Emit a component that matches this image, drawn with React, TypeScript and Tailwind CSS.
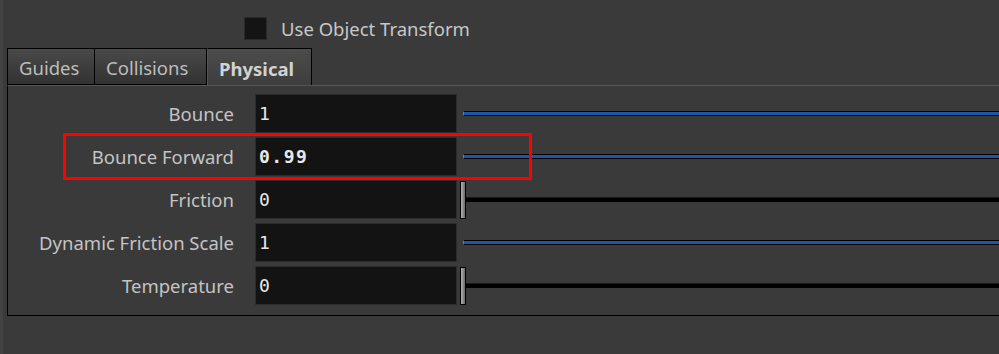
import React from "react";

const sans = "font-['Noto_Sans',_'DejaVu_Sans',_sans-serif]";
const mono = "font-['DejaVu_Sans_Mono',_'Liberation_Mono',_monospace]";

type Param = {
  label: string;
  value: string;
  bold?: boolean;
  kind: "blue" | "thumb";
};

const params: Param[] = [
  { label: "Bounce", value: "1", kind: "blue" },
  { label: "Bounce Forward", value: "0.99", bold: true, kind: "blue" },
  { label: "Friction", value: "0", kind: "thumb" },
  { label: "Dynamic Friction Scale", value: "1", kind: "blue" },
  { label: "Temperature", value: "0", kind: "thumb" },
];

function Slider({ kind }: { kind: Param["kind"] }) {
  if (kind === "blue") {
    return (
      <div className="flex-1 pl-[6px] flex items-center">
        <div className="h-[5px] flex-1 border border-black bg-[#1c58a8] border-l-[#777]" />
      </div>
    );
  }
  return (
    <div className="flex-1 pl-[3px] flex items-center">
      <div className="w-[6px] h-[38px] border border-black bg-gradient-to-r from-[#b4b4b4] to-[#6c6c6c]" />
      <div className="h-[5px] flex-1 bg-black border-t border-t-[#1a1a1a]" />
    </div>
  );
}

function Row({ p }: { p: Param }) {
  return (
    <div className="flex items-center h-[39px]">
      <div className={`w-[226px] text-right text-[18.5px] text-[#c4c4c4] ${sans}`}>{p.label}</div>
      <div className="ml-[21px] w-[202px] h-[39px] border border-[#2c2c2c] bg-[#131313] flex items-center px-[3px]">
        <span className={`text-[18px] tracking-[1.5px] text-[#e8e8e8] ${mono} ${p.bold ? "font-bold" : ""}`}>
          {p.value}
        </span>
      </div>
      <Slider kind={p.kind} />
    </div>
  );
}

function Tab({ label, active, width }: { label: string; active?: boolean; width: string }) {
  return (
    <div
      className={`${width} shrink-0 flex items-center pl-[11px] pt-[3px] text-[18.5px] ${sans} ${
        active
          ? "h-[38px] border-t border-r border-black border-l border-l-[#555] bg-gradient-to-b from-[#4c4c4c] to-[#3d3d3d] font-bold text-[#d2d2d2]"
          : "h-[37px] border border-black -ml-px first:ml-0 bg-gradient-to-b from-[#4a4a4a] to-[#323232] text-[#bdbdbd]"
      }`}
    >
      {label}
    </div>
  );
}

export default function App() {
  return (
    <div className="relative w-[999px] h-[354px] overflow-hidden bg-[#3a3a3a] flex">
      <div className="w-[3px] shrink-0 h-full bg-[#434343]" />
      <div className="flex-1 min-w-0 flex flex-col pl-[4px]">
        <div className="h-[48px] flex items-start pt-[17px] pl-[237px]">
          <div className="w-[23px] h-[23px] shrink-0 border border-[#2a2a2a] bg-[#141414]" />
          <span className={`ml-[14px] text-[18.5px] leading-[23px] whitespace-nowrap text-[#c8c8c8] ${sans}`}>
            Use Object Transform
          </span>
        </div>
        <div className="flex items-start h-[37px]">
          <Tab label="Guides" width="w-[88px]" />
          <Tab label="Collisions" width="w-[113px]" />
          <Tab label="Physical" width="w-[105px]" active />
        </div>
        <div className="w-[1100px] shrink-0 border-t border-t-[#565656] border-l border-l-black border-b border-b-black pt-[8px] pb-[10px] flex flex-col gap-[4px]">
          {params.map((p) => (
            <Row key={p.label} p={p} />
          ))}
        </div>
      </div>
      <div className="absolute left-[63px] top-[133px] w-[469px] h-[47px] border-[3px] border-[#ff0000]" />
    </div>
  );
}
